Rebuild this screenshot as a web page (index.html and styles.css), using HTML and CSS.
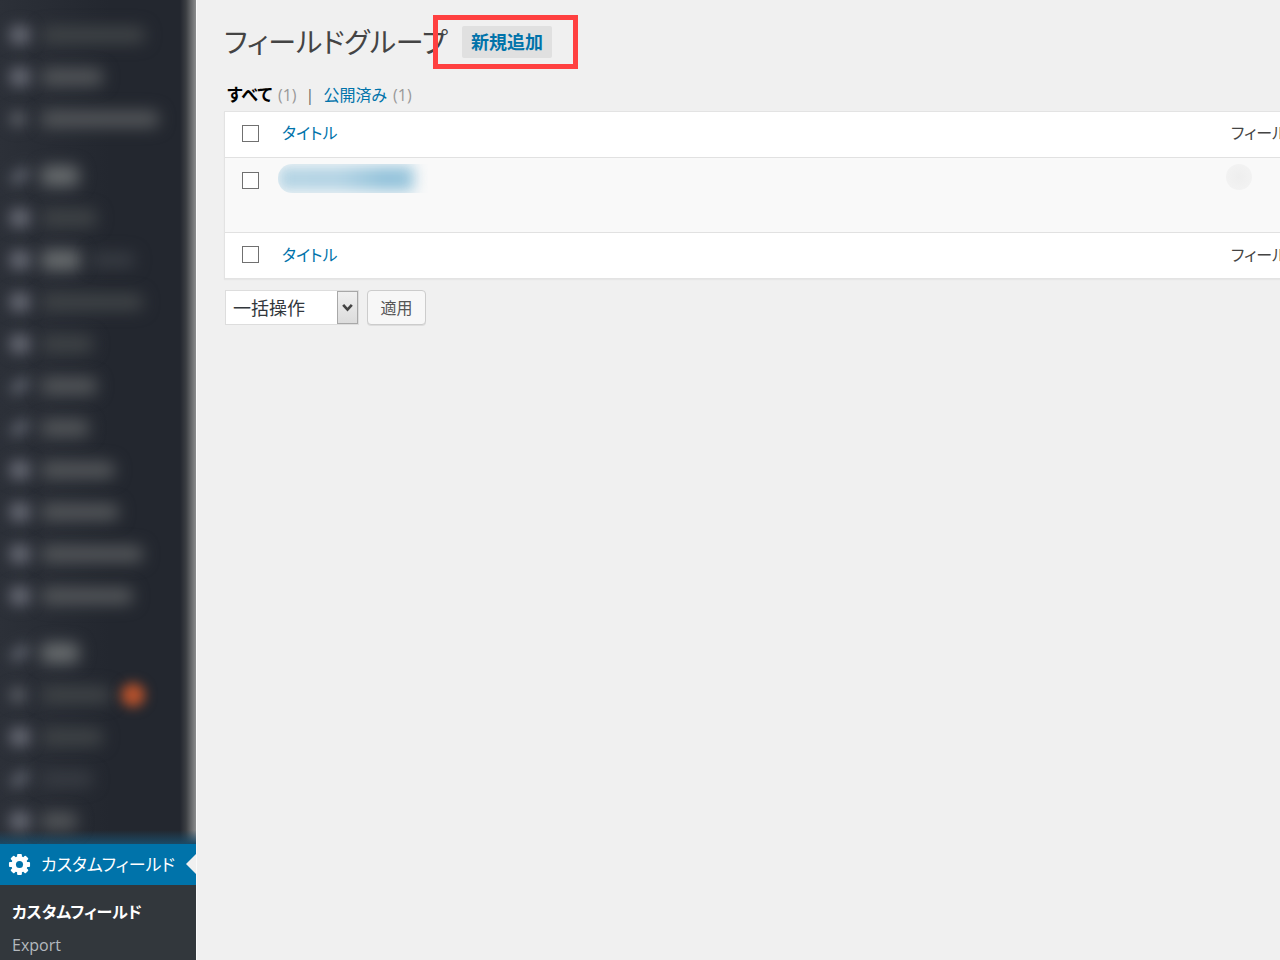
FILE: index.html
```html
<!DOCTYPE html>
<html lang="ja">
<head>
<meta charset="utf-8">
<meta name="viewport" content="width=device-width, initial-scale=1">
<title>フィールドグループ</title>
<link rel="stylesheet" href="styles.css">
</head>
<body>
<div class="admin">
  <nav class="sidebar">
    <div class="menu" aria-hidden="true">
      <ul class="menu-group">
        <li class="item dim"><i class="icon"></i><i class="bar" style="width:104px"></i></li>
        <li class="item"><i class="icon"></i><i class="bar" style="width:62px"></i></li>
        <li class="item"><i class="icon small"></i><i class="bar" style="width:118px"></i></li>
      </ul>
      <ul class="menu-group">
        <li class="item bright"><i class="icon pin"></i><i class="bar" style="width:38px"></i></li>
        <li class="item dim"><i class="icon"></i><i class="bar" style="width:56px"></i></li>
        <li class="item bright"><i class="icon"></i><i class="bar" style="width:40px"></i><i class="bar faint" style="width:44px"></i></li>
        <li class="item dim"><i class="icon"></i><i class="bar" style="width:102px"></i></li>
        <li class="item dim"><i class="icon"></i><i class="bar" style="width:52px"></i></li>
        <li class="item"><i class="icon pin"></i><i class="bar" style="width:56px"></i></li>
        <li class="item"><i class="icon pin"></i><i class="bar" style="width:48px"></i></li>
        <li class="item"><i class="icon"></i><i class="bar" style="width:74px"></i></li>
        <li class="item"><i class="icon"></i><i class="bar" style="width:78px"></i></li>
        <li class="item"><i class="icon"></i><i class="bar" style="width:102px"></i></li>
        <li class="item"><i class="icon"></i><i class="bar" style="width:92px"></i></li>
      </ul>
      <ul class="menu-group">
        <li class="item bright"><i class="icon pin"></i><i class="bar" style="width:38px"></i></li>
        <li class="item dim"><i class="icon small"></i><i class="bar" style="width:70px"></i><i class="count"></i></li>
        <li class="item dim"><i class="icon"></i><i class="bar" style="width:62px"></i></li>
        <li class="item dim"><i class="icon pin"></i><i class="bar faint" style="width:52px"></i></li>
        <li class="item"><i class="icon"></i><i class="bar" style="width:36px"></i></li>
      </ul>
    </div>
    <a class="current" href="#">
      <svg class="gear" viewBox="0 0 24 24" aria-hidden="true">
        <g fill="#fff">
          <rect x="9.500" y="1" width="5" height="22" rx="1"/>
          <rect x="9.500" y="1" width="5" height="22" rx="1" transform="rotate(45 12 12)"/>
          <rect x="9.500" y="1" width="5" height="22" rx="1" transform="rotate(90 12 12)"/>
          <rect x="9.500" y="1" width="5" height="22" rx="1" transform="rotate(135 12 12)"/>
          <circle cx="12" cy="12" r="8.500"/>
        </g>
        <circle cx="12" cy="12" r="3.700" fill="#0073aa"/>
      </svg>
      <span>カスタムフィールド</span>
    </a>
    <ul class="submenu">
      <li><a class="active" href="#">カスタムフィールド</a></li>
      <li><a href="#">Export</a></li>
    </ul>
  </nav>

  <main class="content">
    <header class="heading">
      <h1>フィールドグループ</h1>
      <div class="callout"><button class="add" type="button">新規追加</button></div>
    </header>

    <ul class="filters">
      <li><a class="selected" href="#">すべて</a><span class="num">(1)</span></li>
      <li class="divider">|</li>
      <li><a href="#">公開済み</a><span class="num">(1)</span></li>
    </ul>

    <table class="list">
      <thead>
        <tr>
          <td class="check"><input type="checkbox" aria-label="すべて選択"></td>
          <th scope="col"><a href="#">タイトル</a></th>
          <th scope="col" class="fields">フィールド</th>
        </tr>
      </thead>
      <tbody>
        <tr>
          <td class="check"><input type="checkbox" aria-label="行を選択"></td>
          <td><div class="hidden-title"><i></i></div></td>
          <td class="fields"><div class="hidden-count"></div></td>
        </tr>
      </tbody>
      <tfoot>
        <tr>
          <td class="check"><input type="checkbox" aria-label="すべて選択"></td>
          <th scope="col"><a href="#">タイトル</a></th>
          <th scope="col" class="fields">フィールド</th>
        </tr>
      </tfoot>
    </table>

    <form class="bulk">
      <div class="picker">
        <select aria-label="一括操作"><option>一括操作</option></select>
        <span class="arrow" aria-hidden="true"><svg viewBox="0 0 12 12"><path d="M2 3.500 6 8l4-4.500" fill="none" stroke="#444" stroke-width="2.400"/></svg></span>
      </div>
      <button class="apply" type="button">適用</button>
    </form>
  </main>
</div>
</body>
</html>
```
FILE: styles.css
```css
* { box-sizing: border-box; }

body {
  margin: 0;
  background: #f0f0f0;
  color: #444;
  font-family: "Open Sans", "Noto Sans CJK JP", sans-serif;
  font-size: 16px;
  line-height: 24px;
  font-feature-settings: "palt";
}

ul { list-style: none; margin: 0; padding: 0; }
a { color: #0073aa; text-decoration: none; }

.admin { display: flex; min-height: 100vh; overflow: hidden; }

/* Sidebar */
.sidebar {
  flex: none;
  display: flex;
  flex-direction: column;
  width: 197px;
  background: #32373c;
  border-right: 1px solid #fafafa;
}

.menu {
  padding: 14px 0 2px;
  overflow: hidden;
  background:
    linear-gradient(to top, #1b4a66, transparent 14px),
    linear-gradient(to right, transparent 180px, #3c3f43 186px, #8c8d8e 196px),
    linear-gradient(to right, #2c3038, #23272f 110px);
}

.menu-group + .menu-group { margin-top: 15px; }

.item { display: flex; align-items: center; gap: 10px; height: 42px; padding-left: 9px; }

.icon { width: 22px; height: 20px; border-radius: 8px; background: #62656f; filter: blur(7px); }
.icon.small { width: 18px; height: 16px; margin-right: 4px; background: #585b62; }
.icon.pin { height: 12px; background: #5c606a; transform: rotate(-35deg); }

.bar { height: 16px; border-radius: 6px; background: #56595c; filter: blur(8px); }
.dim .bar { background: #414548; }
.bright .bar { height: 20px; background: #696d6f; }
.item .bar.faint { height: 14px; background: #3a3e45; }

.count { width: 24px; height: 24px; border-radius: 50%; background: #b4512c; filter: blur(6px); }

.current {
  position: relative;
  display: flex;
  align-items: center;
  gap: 10px;
  height: 41px;
  padding-left: 8px;
  background: #0073aa;
  color: #fff;
  font-size: 17px;
  white-space: nowrap;
}

.current::after {
  content: "";
  position: absolute;
  right: 0;
  top: 10px;
  border: 10px solid transparent;
  border-left-width: 0;
  border-right-color: #f0f0f0;
}

.gear { flex: none; width: 23px; height: 23px; }

.submenu { padding: 10px 12px 0; }
.submenu a { display: block; height: 33px; line-height: 34px; color: #b4b9be; white-space: nowrap; }
.submenu .active { color: #fff; font-weight: 700; }

/* Content */
.content { flex: 1; min-width: 0; padding: 15px 0 0 27px; }

.heading { display: flex; align-items: center; height: 54px; }

h1 { flex: none; width: 209px; margin: 0; color: #444; font-size: 28px; font-weight: 400; line-height: 54px; white-space: nowrap; }

.callout {
  position: relative;
  display: flex;
  align-items: center;
  width: 145px;
  height: 54px;
  padding-left: 24px;
  border: 5px solid #ff4040;
}

.add {
  width: 90px;
  height: 32px;
  padding: 0;
  border: 0;
  border-radius: 2px;
  background: #e0e0e0;
  color: #0073aa;
  font: inherit;
  font-size: 18px;
  font-weight: 700;
  line-height: 32px;
}

.filters { display: flex; gap: 9px; padding: 14px 0 4px 3px; color: #666; }
.filters .num { margin-left: 6px; color: #999; }
.filters .selected { color: #000; font-size: 17px; font-weight: 700; }

.list {
  width: calc(100% + 60px);
  background: #fff;
  border: 1px solid #e3e3e3;
  border-collapse: separate;
  border-spacing: 0;
  box-shadow: 0 1px 1px #e6e6e6;
  table-layout: fixed;
}

.list td, .list th { padding: 0; font-weight: 400; text-align: left; vertical-align: middle; }
.list thead td, .list thead th { height: 46px; padding-bottom: 3px; border-bottom: 1px solid #e1e1e1; }
.list tfoot td, .list tfoot th { height: 46px; padding-bottom: 2px; border-top: 1px solid #e1e1e1; }
.list tbody td { height: 74px; padding-top: 6px; background: #f9f9f9; vertical-align: top; }
.list .check { width: 57px; padding-left: 17px; }
.list tbody .check { padding-top: 14px; }
.list .fields { width: 108px; white-space: nowrap; }

.check input {
  display: block;
  width: 17px;
  height: 17px;
  margin: 0;
  appearance: none;
  background: #fff;
  border: 1px solid #707070;
}

.hidden-title { width: 150px; height: 29px; margin-left: -4px; overflow: hidden; border-radius: 14px 0 0 14px; }
.hidden-title i {
  display: block;
  width: 136px;
  height: 25px;
  margin-top: 2px;
  background: linear-gradient(to right, #b4d4e4, #b3d3e4 45%, #92c2da 80%, #9cc7dd);
  filter: blur(7px);
}

.hidden-count { width: 26px; height: 26px; margin-left: -5px; border-radius: 50%; background: radial-gradient(#eeeeee, #f4f4f4); }

.bulk { display: flex; gap: 8px; padding: 11px 0 0 1px; }

.picker { position: relative; width: 134px; height: 35px; }

.picker select {
  width: 100%;
  height: 100%;
  padding: 0 28px 0 7px;
  appearance: none;
  background: #fff;
  border: 1px solid #ddd;
  border-radius: 0;
  color: #32373c;
  font: inherit;
  font-size: 18px;
  font-feature-settings: inherit;
}

.arrow {
  position: absolute;
  top: 1px;
  right: 1px;
  bottom: 1px;
  display: grid;
  place-items: center;
  width: 21px;
  background: linear-gradient(#f0f0f0, #dcdcdc);
  border: 1px solid #a8a8a8;
  pointer-events: none;
}

.arrow svg { width: 13px; height: 13px; }

.apply {
  width: 59px;
  height: 35px;
  padding: 0;
  background: #f7f7f7;
  border: 1px solid #ccc;
  border-radius: 4px;
  box-shadow: 0 1px 0 #ddd;
  color: #555;
  font: inherit;
}
```
